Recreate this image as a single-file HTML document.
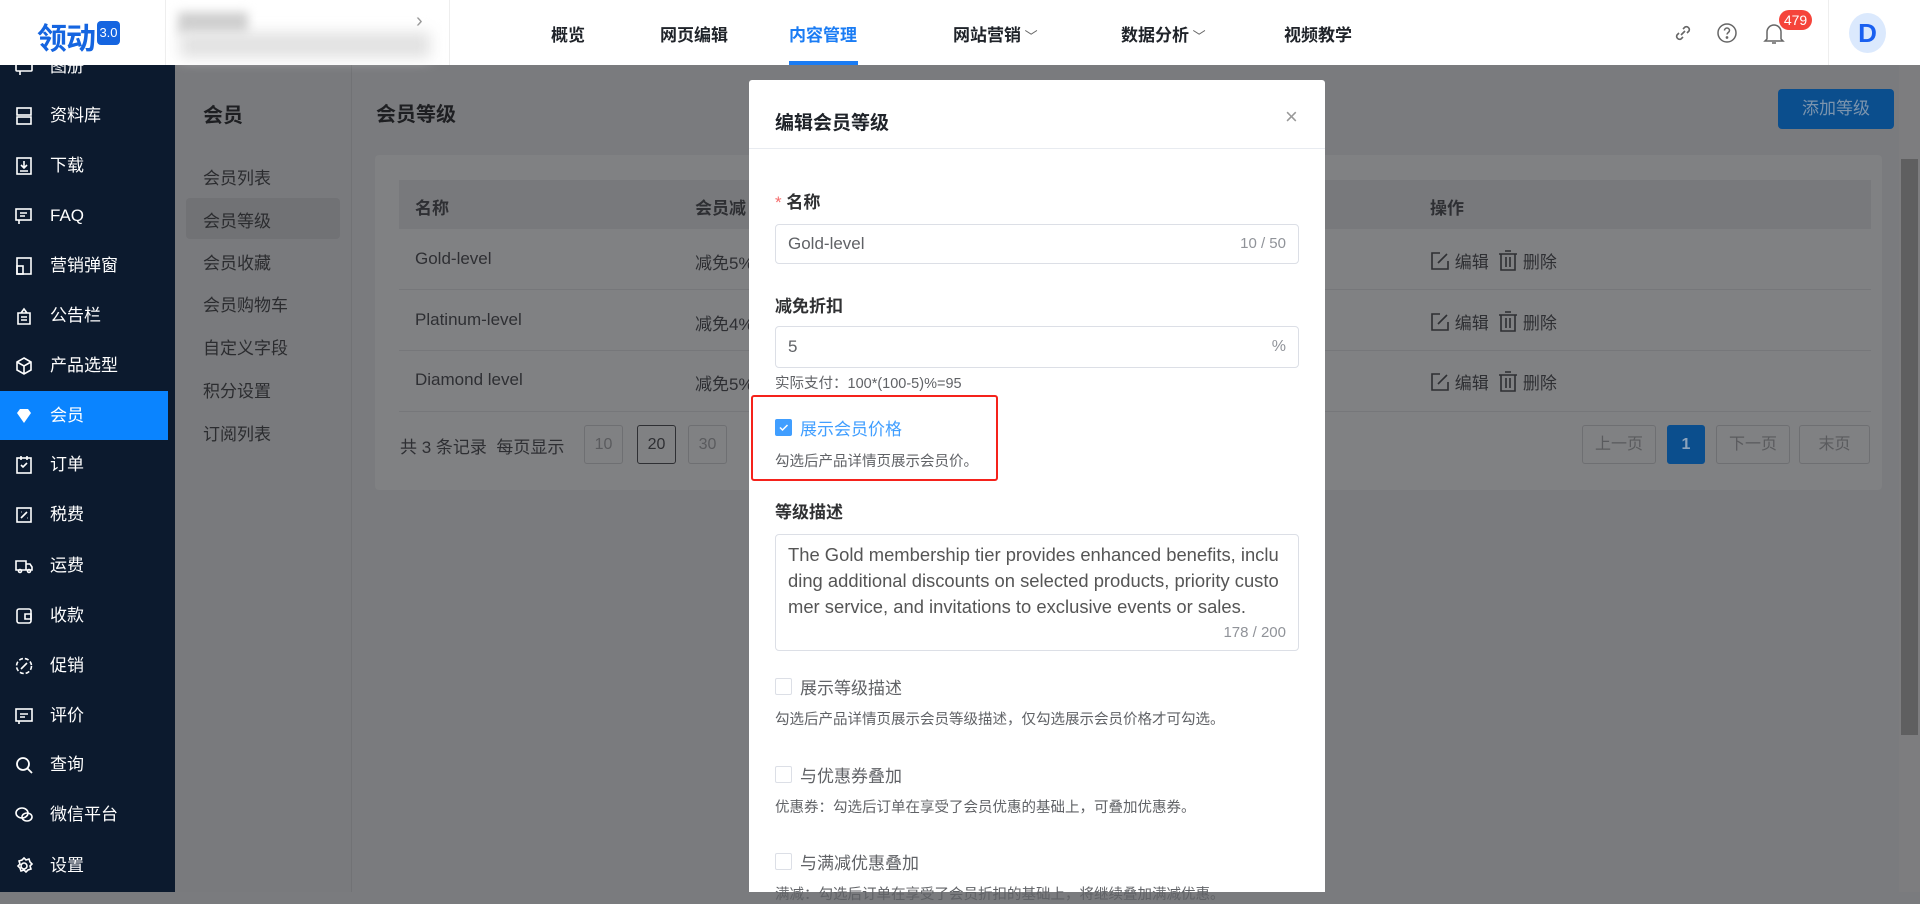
<!DOCTYPE html>
<html><head><meta charset="utf-8"><style>
*{margin:0;padding:0;box-sizing:border-box}
body{width:1920px;height:892px;overflow:hidden;position:relative;font-family:"Liberation Sans","Noto Sans CJK SC",sans-serif;background:#7a7b7e;color:#303133}
.a{position:absolute;white-space:nowrap}
.hdr{position:absolute;left:0;top:0;width:1920px;height:65px;background:#fff;z-index:5}
.nav{position:absolute;top:21px;font-size:17px;font-weight:bold;color:#1f2329}
.side{position:absolute;left:0;top:65px;width:175px;height:827px;background:#0c1a2e;overflow:hidden}
.si{position:absolute;left:0;width:168px;height:49px;color:#fff;font-size:17px;line-height:49px;padding-left:50px}
.si svg{position:absolute;left:14px;top:15px}
.sub{position:absolute;left:175px;top:65px;width:177px;height:827px;background:#797a7d;border-right:1px solid #717275}
.subi{position:absolute;left:28px;font-size:17px;color:#2b2c2f}
.card{position:absolute;left:375px;top:155px;width:1507px;height:335px;background:#808183;border-radius:4px}
.td{position:absolute;font-size:17px;color:#2e2f33}
.op{position:absolute;left:1430px;font-size:17px;color:#2e2f33}
.op svg{vertical-align:-3px}
.pb{position:absolute;top:425px;height:39px;border:1px solid #6e6f72;border-radius:3px;font-size:16px;color:#5a5b5e;text-align:center;line-height:37px}
.modal{position:absolute;left:749px;top:80px;width:576px;height:812px;background:#fff;border-radius:3px 3px 0 0}
.lbl{position:absolute;left:26px;font-size:17px;font-weight:bold;color:#303133}
.inp{position:absolute;left:26px;width:524px;border:1px solid #dcdfe6;border-radius:4px;font-size:17px;color:#606266}
.help{position:absolute;left:26px;font-size:14.5px;color:#606266}
.cb{position:absolute;left:26px;width:17px;height:17px;border:1px solid #dcdfe6;border-radius:2px;background:#fff}
.cbt{position:absolute;left:51px;font-size:17px;color:#606266}
</style></head><body>

<div class="hdr">
 <div class="a" style="left:37px;top:14px;font-size:30px;font-weight:bold;color:#1565e0;letter-spacing:-1px">领动</div>
 <div class="a" style="left:97px;top:21px;width:23px;height:24px;background:#1565e0;border-radius:4px;color:#fff;font-size:13px;line-height:24px;text-align:center">3.0</div>
 <div class="a" style="left:165px;top:0;width:265px;height:65px;border-left:1px solid #eee"></div>
 <div class="a" style="left:178px;top:12px;width:70px;height:22px;background:#cfcfcf;filter:blur(5px)"></div>
 <div class="a" style="left:180px;top:32px;width:250px;height:26px;background:#e2e2e2;filter:blur(7px)"></div>
 <div class="a" style="left:416px;top:10px;font-size:20px;color:#999">›</div>
 <div class="a" style="left:449px;top:0;width:1px;height:65px;background:#eee"></div>
 <div class="nav" style="left:551px">概览</div>
 <div class="nav" style="left:660px">网页编辑</div>
 <div class="nav" style="left:789px;color:#1a7cf4">内容管理</div>
 <div class="a" style="left:789px;top:61px;width:69px;height:4px;background:#1a7cf4"></div>
 <div class="nav" style="left:953px">网站营销<span style="font-weight:normal;color:#666;font-size:13px"> ﹀</span></div>
 <div class="nav" style="left:1121px">数据分析<span style="font-weight:normal;color:#666;font-size:13px"> ﹀</span></div>
 <div class="nav" style="left:1284px">视频教学</div>
 <svg class="a" style="left:1672px;top:22px" width="22" height="22" viewBox="0 0 22 22" fill="none" stroke="#666" stroke-width="1.6"><path d="M9 13l4-4M7 11l-2 2a3 3 0 004 4l2-2M15 11l2-2a3 3 0 00-4-4l-2 2"/></svg>
 <svg class="a" style="left:1716px;top:22px" width="22" height="22" viewBox="0 0 22 22" fill="none" stroke="#666" stroke-width="1.5"><circle cx="11" cy="11" r="9"/><path d="M8.5 8.5a2.5 2.5 0 115 0c0 2-2.5 2-2.5 4"/><circle cx="11" cy="15.5" r=".6" fill="#666"/></svg>
 <svg class="a" style="left:1763px;top:22px" width="22" height="24" viewBox="0 0 22 24" fill="none" stroke="#666" stroke-width="1.5"><path d="M4 17V10a7 7 0 0114 0v7l2 2H2z M9 21h4"/></svg>
 <div class="a" style="left:1779px;top:10px;width:33px;height:20px;background:#f5443b;border-radius:10px;color:#fff;font-size:14px;line-height:20px;text-align:center">479</div>
 <div class="a" style="left:1828px;top:0;width:1px;height:65px;background:#eee"></div>
 <div class="a" style="left:1849px;top:13px;width:37px;height:40px;border-radius:50%;background:#dbe9fd;color:#1a60f0;font-weight:bold;font-size:26px;text-align:center;line-height:40px">D</div>
</div>

<div class="side">
 <div class="si" style="top:-23px"><svg width="20" height="20" viewBox="0 0 20 20" fill="none" stroke="#fff" stroke-width="1.6"><rect x="2" y="3" width="16" height="11" rx="1"/><path d="M6 14v4"/></svg>图册</div>
 <div class="si" style="top:26px"><svg width="20" height="20" viewBox="0 0 20 20" fill="none" stroke="#fff" stroke-width="1.6"><rect x="3" y="2" width="14" height="7"/><rect x="3" y="11" width="14" height="7"/></svg>资料库</div>
 <div class="si" style="top:76px"><svg width="20" height="20" viewBox="0 0 20 20" fill="none" stroke="#fff" stroke-width="1.6"><rect x="3" y="2" width="14" height="16"/><path d="M10 5v7M7 9l3 3 3-3M6 15h8"/></svg>下载</div>
 <div class="si" style="top:126px"><svg width="20" height="20" viewBox="0 0 20 20" fill="none" stroke="#fff" stroke-width="1.6"><rect x="2" y="3" width="15" height="11"/><path d="M6 7h7M6 10h5M5 14v4"/></svg>FAQ</div>
 <div class="si" style="top:176px"><svg width="20" height="20" viewBox="0 0 20 20" fill="none" stroke="#fff" stroke-width="1.6"><rect x="3" y="2" width="14" height="16"/><rect x="3" y="10" width="6" height="8"/></svg>营销弹窗</div>
 <div class="si" style="top:226px"><svg width="20" height="20" viewBox="0 0 20 20" fill="none" stroke="#fff" stroke-width="1.6"><path d="M4 7h12v11H4zM7 7l3-4 3 4M7 11h6M7 14h6"/></svg>公告栏</div>
 <div class="si" style="top:276px"><svg width="20" height="20" viewBox="0 0 20 20" fill="none" stroke="#fff" stroke-width="1.6"><path d="M10 2l7 4v8l-7 4-7-4V6zM3 6l7 4 7-4M10 10v8"/></svg>产品选型</div>
 <div class="si" style="top:326px;background:#0a84ff"><svg width="20" height="20" viewBox="0 0 20 20"><path d="M3 7l3-4h8l3 4-7 10z" fill="#fff"/></svg>会员</div>
 <div class="si" style="top:375px"><svg width="20" height="20" viewBox="0 0 20 20" fill="none" stroke="#fff" stroke-width="1.6"><rect x="3" y="3" width="14" height="15"/><path d="M7 10l2 2 4-4M7 1v4M13 1v4"/></svg>订单</div>
 <div class="si" style="top:425px"><svg width="20" height="20" viewBox="0 0 20 20" fill="none" stroke="#fff" stroke-width="1.6"><rect x="3" y="3" width="14" height="14"/><path d="M7 13l6-6M7 7h.5M13 13h.5"/></svg>税费</div>
 <div class="si" style="top:476px"><svg width="20" height="20" viewBox="0 0 20 20" fill="none" stroke="#fff" stroke-width="1.6"><path d="M2 5h10v9H2zM12 8h4l2 3v3h-6"/><circle cx="6" cy="15" r="1.5"/><circle cx="15" cy="15" r="1.5"/></svg>运费</div>
 <div class="si" style="top:526px"><svg width="20" height="20" viewBox="0 0 20 20" fill="none" stroke="#fff" stroke-width="1.6"><rect x="3" y="3" width="14" height="14" rx="2"/><path d="M11 8h6v5h-6z"/></svg>收款</div>
 <div class="si" style="top:576px"><svg width="20" height="20" viewBox="0 0 20 20" fill="none" stroke="#fff" stroke-width="1.6"><circle cx="10" cy="10" r="7.5" stroke-dasharray="4 2"/><path d="M7 13l6-6"/></svg>促销</div>
 <div class="si" style="top:626px"><svg width="20" height="20" viewBox="0 0 20 20" fill="none" stroke="#fff" stroke-width="1.6"><rect x="2" y="3" width="16" height="12"/><path d="M6 8h8M6 11h5M5 15v3"/></svg>评价</div>
 <div class="si" style="top:675px"><svg width="20" height="20" viewBox="0 0 20 20" fill="none" stroke="#fff" stroke-width="1.8"><circle cx="9" cy="9" r="6"/><path d="M13.5 13.5L18 18"/></svg>查询</div>
 <div class="si" style="top:725px"><svg width="20" height="20" viewBox="0 0 20 20" fill="none" stroke="#fff" stroke-width="1.6"><ellipse cx="8" cy="8" rx="6" ry="5"/><ellipse cx="13" cy="12" rx="5" ry="4"/></svg>微信平台</div>
 <div class="si" style="top:776px"><svg width="20" height="20" viewBox="0 0 20 20" fill="none" stroke="#fff" stroke-width="1.6"><circle cx="10" cy="10" r="3"/><path d="M10 2l2 2 3-1 1 3 2 2-2 2 1 3-3 1-2 2-2-2-3 1-1-3-2-2 2-2-1-3 3-1z"/></svg>设置</div>
</div>

<div class="sub">
 <div class="a" style="left:28px;top:34px;font-size:20px;font-weight:bold;color:#1e1f22">会员</div>
 <div class="a" style="left:11px;top:133px;width:154px;height:41px;background:#717275;border-radius:4px"></div>
 <div class="subi" style="top:99px">会员列表</div>
 <div class="subi" style="top:142px">会员等级</div>
 <div class="subi" style="top:184px">会员收藏</div>
 <div class="subi" style="top:226px">会员购物车</div>
 <div class="subi" style="top:269px">自定义字段</div>
 <div class="subi" style="top:312px">积分设置</div>
 <div class="subi" style="top:355px">订阅列表</div>
</div>

<div class="a" style="left:376px;top:98px;font-size:20px;font-weight:bold;color:#1e1f22">会员等级</div>
<div class="a" style="left:1778px;top:89px;width:116px;height:40px;background:#0b4e8d;border-radius:4px;color:#7c94ad;font-size:17px;text-align:center;line-height:40px">添加等级</div>

<div class="card"></div>
<div class="a" style="left:399px;top:180px;width:1472px;height:49px;background:#78797c"></div>
<div class="td" style="left:415px;top:194px;font-weight:bold">名称</div>
<div class="td" style="left:695px;top:194px;font-weight:bold">会员减</div>
<div class="td" style="left:1430px;top:194px;font-weight:bold">操作</div>
<div class="a" style="left:399px;top:289px;width:1472px;height:1px;background:#76777a"></div>
<div class="a" style="left:399px;top:350px;width:1472px;height:1px;background:#76777a"></div>
<div class="a" style="left:399px;top:411px;width:1472px;height:1px;background:#76777a"></div>
<div class="td" style="left:415px;top:249px">Gold-level</div><div class="td" style="left:695px;top:249px">减免5%</div>
<div class="td" style="left:415px;top:310px">Platinum-level</div><div class="td" style="left:695px;top:310px">减免4%</div>
<div class="td" style="left:415px;top:370px">Diamond level</div><div class="td" style="left:695px;top:370px">减免5%</div>
<div class="op" style="top:248px"><svg width="20" height="20" viewBox="0 0 20 20" fill="none" stroke="#2e2f33" stroke-width="1.6"><path d="M10 2H2v16h16v-8M8 12l9-9"/></svg> 编辑 &nbsp;<svg width="20" height="21" viewBox="0 0 20 21" fill="none" stroke="#2e2f33" stroke-width="1.6"><path d="M1 4h18M7 1h6M3 4v16h14V4M8 7v10M12 7v10"/></svg> 删除</div>
<div class="op" style="top:309px"><svg width="20" height="20" viewBox="0 0 20 20" fill="none" stroke="#2e2f33" stroke-width="1.6"><path d="M10 2H2v16h16v-8M8 12l9-9"/></svg> 编辑 &nbsp;<svg width="20" height="21" viewBox="0 0 20 21" fill="none" stroke="#2e2f33" stroke-width="1.6"><path d="M1 4h18M7 1h6M3 4v16h14V4M8 7v10M12 7v10"/></svg> 删除</div>
<div class="op" style="top:369px"><svg width="20" height="20" viewBox="0 0 20 20" fill="none" stroke="#2e2f33" stroke-width="1.6"><path d="M10 2H2v16h16v-8M8 12l9-9"/></svg> 编辑 &nbsp;<svg width="20" height="21" viewBox="0 0 20 21" fill="none" stroke="#2e2f33" stroke-width="1.6"><path d="M1 4h18M7 1h6M3 4v16h14V4M8 7v10M12 7v10"/></svg> 删除</div>
<div class="td" style="left:400px;top:433px">共 3 条记录 &nbsp;每页显示</div>
<div class="pb" style="left:584px;width:39px">10</div>
<div class="pb" style="left:637px;width:39px;border-color:#2e2f33;color:#2e2f33">20</div>
<div class="pb" style="left:688px;width:39px">30</div>
<div class="pb" style="left:1582px;width:74px">上一页</div>
<div class="pb" style="left:1667px;width:38px;background:#0b4e8d;border-color:#0b4e8d;color:#8ca3bc;font-weight:bold">1</div>
<div class="pb" style="left:1716px;width:74px">下一页</div>
<div class="pb" style="left:1799px;width:71px">末页</div>

<div class="a" style="left:1899px;top:65px;width:21px;height:827px;background:#7d7d7f"></div>
<div class="a" style="left:1901px;top:159px;width:17px;height:576px;background:#5f5f60"></div>

<div class="modal">
 <div class="a" style="left:26px;top:28px;font-size:19px;font-weight:bold;color:#1f2329">编辑会员等级</div>
 <div class="a" style="left:536px;top:24px;font-size:22px;color:#999">×</div>
 <div class="a" style="left:0;top:68px;width:576px;height:1px;background:#e8ebf0"></div>
 <div class="lbl" style="top:108px"><span style="color:#f56c6c;font-weight:normal">* </span>名称</div>
 <div class="inp" style="top:144px;height:40px;line-height:38px;padding-left:12px">Gold-level<span style="position:absolute;right:12px;color:#909399;font-size:15px">10 / 50</span></div>
 <div class="lbl" style="top:212px">减免折扣</div>
 <div class="inp" style="top:246px;height:42px;line-height:40px;padding-left:12px">5<span style="position:absolute;right:12px;color:#909399;font-size:16px">%</span></div>
 <div class="help" style="top:292px">实际支付：100*(100-5)%=95</div>
 <div class="a" style="left:2px;top:315px;width:247px;height:86px;border:2px solid #f5221b;border-radius:3px"></div>
 <div class="cb" style="top:339px;background:#409eff;border-color:#409eff"><svg width="15" height="15" viewBox="0 0 15 15" style="position:absolute;left:0;top:0"><path d="M4 7.5l2.5 2.5 5-5" fill="none" stroke="#fff" stroke-width="1.5"/></svg></div>
 <div class="cbt" style="top:335px;color:#409eff">展示会员价格</div>
 <div class="help" style="top:370px">勾选后产品详情页展示会员价。</div>
 <div class="lbl" style="top:418px">等级描述</div>
 <div class="inp" style="top:454px;height:117px;padding:7px 12px;font-size:18.4px;line-height:26px;white-space:normal;word-break:break-all;color:#555">The Gold membership tier provides enhanced benefits, including additional discounts on selected products, priority customer service, and invitations to exclusive events or sales.<span style="position:absolute;right:12px;bottom:4px;color:#909399;font-size:15px">178 / 200</span></div>
 <div class="cb" style="top:598px"></div><div class="cbt" style="top:594px">展示等级描述</div>
 <div class="help" style="top:628px">勾选后产品详情页展示会员等级描述，仅勾选展示会员价格才可勾选。</div>
 <div class="cb" style="top:686px"></div><div class="cbt" style="top:682px">与优惠券叠加</div>
 <div class="help" style="top:716px">优惠券：勾选后订单在享受了会员优惠的基础上，可叠加优惠券。</div>
 <div class="cb" style="top:773px"></div><div class="cbt" style="top:769px">与满减优惠叠加</div>
 <div class="help" style="top:803px">满减：勾选后订单在享受了会员折扣的基础上，将继续叠加满减优惠。</div>
</div>
</body></html>
